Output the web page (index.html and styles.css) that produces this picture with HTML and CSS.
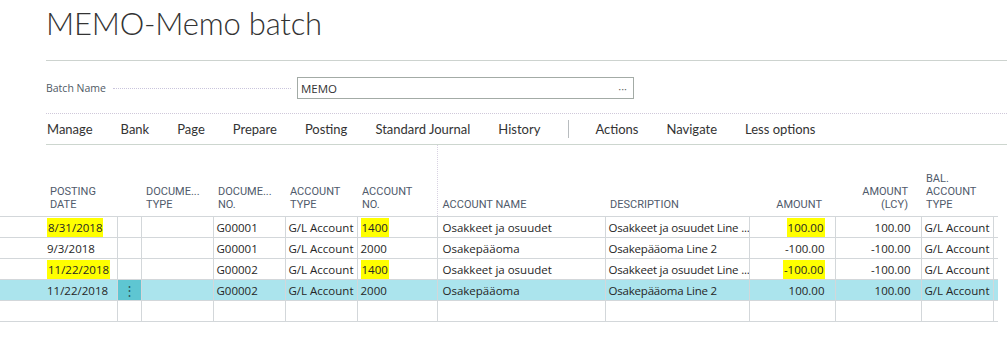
FILE: index.html
```html
<!DOCTYPE html>
<html lang="en">
<head>
  <meta charset="UTF-8">
  <link rel="stylesheet" href="styles.css">
</head>
<body>
  <div class="page">
    <h1 class="title">MEMO-Memo batch</h1>

    <div class="head">
      <div class="field">
        <span class="label">Batch Name</span>
        <span class="leader"></span>
        <div class="input">
          <span>MEMO</span>
          <span class="more">···</span>
        </div>
      </div>
    </div>

    <div class="menu">
      <span>Manage</span>
      <span>Bank</span>
      <span>Page</span>
      <span>Prepare</span>
      <span>Posting</span>
      <span>Standard Journal</span>
      <span>History</span>
      <span class="sep"></span>
      <span>Actions</span>
      <span>Navigate</span>
      <span>Less options</span>
    </div>

    <table class="grid">
      <colgroup>
        <col style="width:117px">
        <col style="width:24px">
        <col style="width:72px">
        <col style="width:72px">
        <col style="width:72px">
        <col style="width:80px">
        <col style="width:168px">
        <col style="width:144px">
        <col style="width:86px">
        <col style="width:86px">
        <col style="width:72px">
        <col style="width:5px">
      </colgroup>
      <thead>
        <tr>
          <th class="date">POSTING<br>DATE</th>
          <th></th>
          <th>DOCUME...<br>TYPE</th>
          <th>DOCUME...<br>NO.</th>
          <th>ACCOUNT<br>TYPE</th>
          <th>ACCOUNT<br>NO.</th>
          <th class="name">ACCOUNT NAME</th>
          <th>DESCRIPTION</th>
          <th class="num">AMOUNT</th>
          <th class="num">AMOUNT<br>(LCY)</th>
          <th>BAL.<br>ACCOUNT<br>TYPE</th>
          <th class="end"></th>
        </tr>
      </thead>
      <tbody>
        <tr>
          <td class="date"><span class="hl">8/31/2018</span></td>
          <td></td>
          <td></td>
          <td>G00001</td>
          <td>G/L Account</td>
          <td><span class="hl">1400</span></td>
          <td class="name">Osakkeet ja osuudet</td>
          <td class="desc">Osakkeet ja osuudet Line ...</td>
          <td class="num"><span class="hl">100.00</span></td>
          <td class="num">100.00</td>
          <td>G/L Account</td>
          <td class="end"></td>
        </tr>
        <tr>
          <td class="date">9/3/2018</td>
          <td></td>
          <td></td>
          <td>G00001</td>
          <td>G/L Account</td>
          <td>2000</td>
          <td class="name">Osakepääoma</td>
          <td class="desc">Osakepääoma Line 2</td>
          <td class="num">-100.00</td>
          <td class="num">-100.00</td>
          <td>G/L Account</td>
          <td class="end"></td>
        </tr>
        <tr>
          <td class="date"><span class="hl">11/22/2018</span></td>
          <td></td>
          <td></td>
          <td>G00002</td>
          <td>G/L Account</td>
          <td><span class="hl">1400</span></td>
          <td class="name">Osakkeet ja osuudet</td>
          <td class="desc">Osakkeet ja osuudet Line ...</td>
          <td class="num"><span class="hl">-100.00</span></td>
          <td class="num">-100.00</td>
          <td>G/L Account</td>
          <td class="end"></td>
        </tr>
        <tr class="sel">
          <td class="date">11/22/2018</td>
          <td class="dots">⋮</td>
          <td></td>
          <td>G00002</td>
          <td>G/L Account</td>
          <td>2000</td>
          <td class="name">Osakepääoma</td>
          <td class="desc">Osakepääoma Line 2</td>
          <td class="num">100.00</td>
          <td class="num">100.00</td>
          <td>G/L Account</td>
          <td class="end"></td>
        </tr>
        <tr>
          <td class="date"></td>
          <td></td>
          <td></td>
          <td></td>
          <td></td>
          <td></td>
          <td class="name"></td>
          <td class="desc"></td>
          <td></td>
          <td></td>
          <td></td>
          <td class="end"></td>
        </tr>
      </tbody>
    </table>
  </div>
</body>
</html>
```

FILE: styles.css
```css
body{
	margin:0;
	background:#fff;
	font-family:"Open Sans","Liberation Sans",sans-serif;
	color:#212121;
}
.title{
	margin:3px 0 0 46px;
	font-family:"Lato","Open Sans",sans-serif;
	font-size:31px;
	letter-spacing:-0.2px;
	line-height:40px;
	font-weight:300;
	color:#333;
}
.head{
	margin:17px 0 0 46px;
	border-top:1px solid #cdd3cf;
	padding:16px 0 14px;
}
.field{
	display:flex;
	align-items:center;
}
.label{
	font-size:10.5px;
	color:#505a66;
}
.leader{
	flex:0 0 auto;
	width:178px;
	margin:0 6px 0 7px;
	border-bottom:1px dotted #c9c4dc;
	height:1px;
}
.input{
	width:326px;
	height:20px;
	border:1px solid #a3aba6;
	display:flex;
	align-items:center;
	justify-content:space-between;
	padding:0 6px 0 3px;
	font-size:11.5px;
	color:#333;
}
.input .more{
	color:#666;
	font-size:11px;
}
.menu{
	margin-left:46px;
	height:30px;
	border-top:1px dotted #cfc8da;
	border-bottom:1px solid #cdd6cf;
	display:flex;
	align-items:center;
	gap:28px;
	font-family:"Lato","Open Sans",sans-serif;
	font-size:13px;
	color:#333;
	padding-left:1px;
}
.menu .sep{
	width:1px;
	height:18px;
	background:#b8bcbf;
	margin:0 -2px 0 0;
}
.grid{
	border-collapse:collapse;
	table-layout:fixed;
	width:998px;
}
.grid th{
	height:66px;
	vertical-align:bottom;
	text-align:left;
	padding:0 5px 5px;
	font-family:"Roboto",sans-serif;
	font-weight:normal;
	font-size:11px;
	line-height:13px;
	color:#505a6b;
	border-bottom:1px solid #d3d7da;
	white-space:nowrap;
}
.grid th.date{
	padding-left:50px;
}
.grid th.name{
	border-left:1px dotted #d8d2e2;
}
.grid th.num{
	text-align:right;
	padding-right:13px;
}
.grid td{
	height:20px;
	padding:0 3px;
	font-size:11.5px;
	white-space:nowrap;
	overflow:hidden;
	border:1px solid #d3d7da;
	border-top:none;
	color:#262626;
}
.grid td.date{
	padding-left:47px;
	border-left:none;
}
.grid td.name{
	padding-left:5px;
}
.grid td.desc{
	padding-right:0;
	letter-spacing:-0.2px;
}
.grid td.num{
	text-align:right;
	padding-right:10px;
}
.grid td.end{
	border-right:none;
}
.hl{
	background:#ffff00;
	padding:2px 1px;
}
.sel td{
	background:#abe4ed;
}
.sel td.dots{
	background:#5ec6d2;
	text-align:center;
	color:#2f5960;
	font-size:13px;
}
```
